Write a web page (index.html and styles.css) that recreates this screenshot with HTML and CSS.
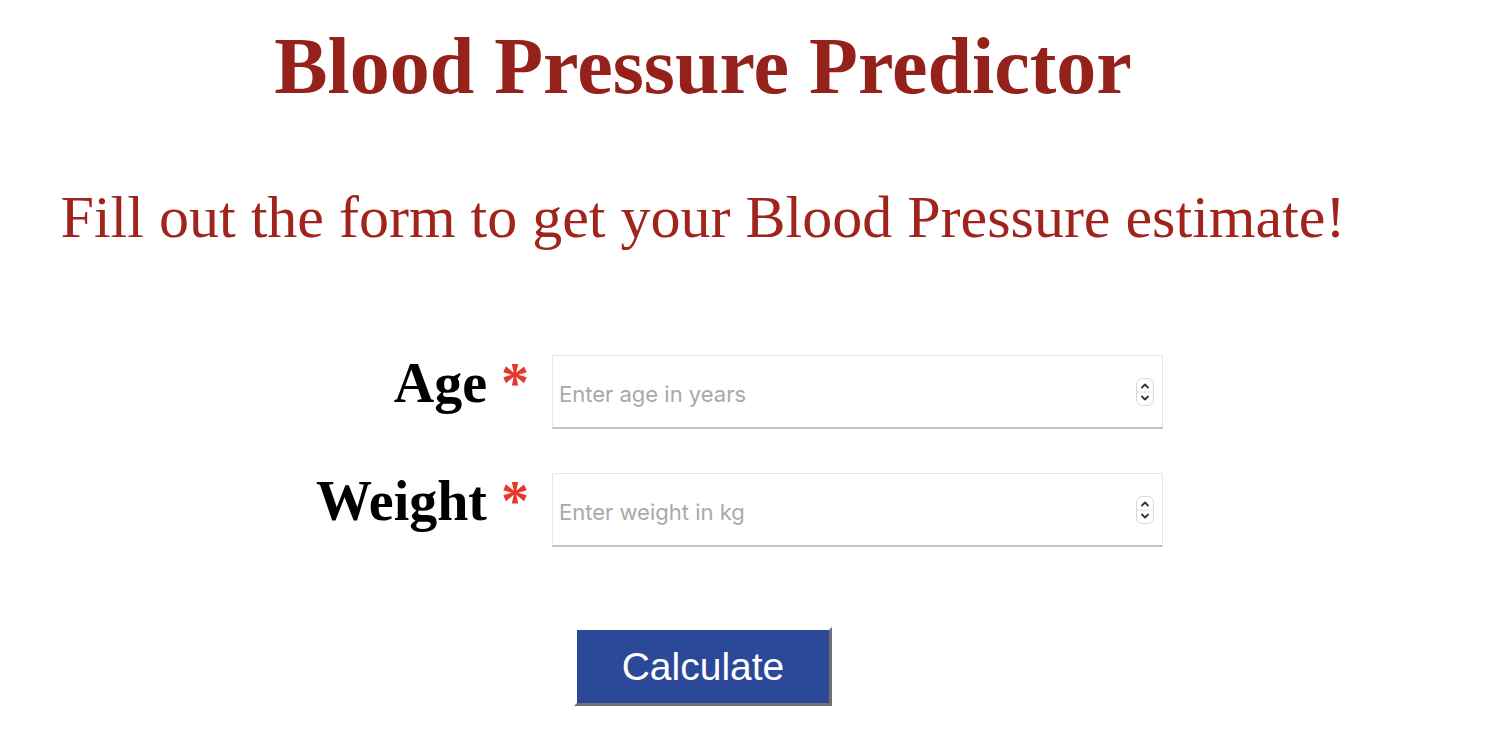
FILE: index.html
```html
<!DOCTYPE html>
<html lang="en">
<head>
<meta charset="utf-8">
<title>Blood Pressure Predictor</title>
<link rel="stylesheet" href="styles.css">
</head>
<body>
<main class="page">
  <h1 class="title">Blood Pressure Predictor</h1>
  <h2 class="subtitle">Fill out the form to get your Blood Pressure estimate!</h2>
  <form class="form">
    <div class="row">
      <label class="label" for="age">Age <span class="req">*</span></label>
      <div class="field">
        <input class="input" id="age" type="number" placeholder="Enter age in years">
        <span class="spin"><svg width="20" height="30" viewBox="0 0 20 30"><rect x="1.5" y="1.5" width="17" height="27" rx="6" fill="#fff" stroke="#d6d6d6"/><line x1="2" y1="15" x2="18" y2="15" stroke="#e2e2e2"/><path d="M7 10.5 L10 7.5 L13 10.5" fill="none" stroke="#333" stroke-width="1.8" stroke-linecap="round" stroke-linejoin="round"/><path d="M7 19.5 L10 22.5 L13 19.5" fill="none" stroke="#333" stroke-width="1.8" stroke-linecap="round" stroke-linejoin="round"/></svg></span>
      </div>
    </div>
    <div class="row">
      <label class="label" for="weight">Weight <span class="req">*</span></label>
      <div class="field">
        <input class="input" id="weight" type="number" placeholder="Enter weight in kg">
        <span class="spin"><svg width="20" height="30" viewBox="0 0 20 30"><rect x="1.5" y="1.5" width="17" height="27" rx="6" fill="#fff" stroke="#d6d6d6"/><line x1="2" y1="15" x2="18" y2="15" stroke="#e2e2e2"/><path d="M7 10.5 L10 7.5 L13 10.5" fill="none" stroke="#333" stroke-width="1.8" stroke-linecap="round" stroke-linejoin="round"/><path d="M7 19.5 L10 22.5 L13 19.5" fill="none" stroke="#333" stroke-width="1.8" stroke-linecap="round" stroke-linejoin="round"/></svg></span>
      </div>
    </div>
    <div class="actions">
      <button class="btn" type="button">Calculate</button>
    </div>
  </form>
</main>
</body>
</html>
```
FILE: styles.css
```css
html, body {
  margin: 0;
  padding: 0;
  background: #fff;
}
.page {
  width: 1390px;
  margin-left: 8px;
  font-family: "Liberation Serif", "Times New Roman", serif;
}
.title {
  margin: 26px 0 0;
  font-size: 80px;
  line-height: 80px;
  font-weight: bold;
  color: #95221a;
  text-align: center;
}
.subtitle {
  margin: 81px 0 0;
  font-size: 60px;
  line-height: 60px;
  font-weight: normal;
  color: #a1241c;
  text-align: center;
}
.form {
  margin-top: 108px;
  display: flex;
  flex-direction: column;
  gap: 44px;
}
.row {
  display: flex;
  align-items: flex-start;
  gap: 23px;
}
.label {
  width: 521px;
  text-align: right;
  font-size: 56px;
  line-height: 56px;
  font-weight: bold;
  color: #000;
}
.req {
  color: #e8372a;
}
.field {
  position: relative;
  width: 611px;
  height: 74px;
}
.input {
  box-sizing: border-box;
  width: 611px;
  height: 74px;
  margin: 0;
  padding: 4px 6px 0;
  border: 1px solid #e6e6e6;
  border-bottom: 2px solid #c4c4c4;
  border-radius: 0;
  outline: none;
  background: #fff;
  font-family: Inter, "Liberation Sans", sans-serif;
  font-size: 22px;
  color: #333;
  -moz-appearance: textfield;
  appearance: textfield;
}
.input::-webkit-outer-spin-button,
.input::-webkit-inner-spin-button {
  -webkit-appearance: none;
  margin: 0;
}
.input::placeholder {
  color: #a9a9a9;
}
.spin {
  position: absolute;
  right: 8px;
  top: 22px;
  width: 20px;
  height: 30px;
  display: block;
}
.spin svg {
  display: block;
}
.actions {
  margin-top: 36px;
  display: flex;
  justify-content: center;
}
.btn {
  box-sizing: border-box;
  width: 258px;
  height: 79px;
  margin-left: 0;
  padding: 0;
  border-style: solid;
  border-width: 3px;
  border-color: #ffffff #707070 #707070 #ffffff;
  background: #2b4899;
  color: #fff;
  font-family: "Liberation Sans", Arial, sans-serif;
  font-size: 39px;
  cursor: pointer;
}
```
